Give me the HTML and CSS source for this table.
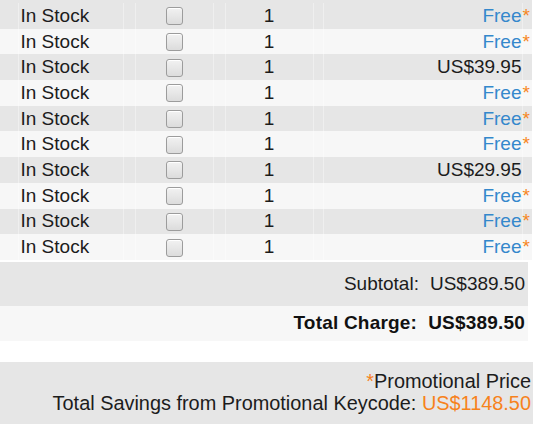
FILE: index.html
```html
<!DOCTYPE html>
<html>
<head>
<meta charset="utf-8">
<link rel="stylesheet" href="styles.css">
</head>
<body>
<div class="page">
  <div class="items-wrap">
  <table class="items">
    <colgroup>
      <col class="c0"><col class="c1"><col class="c2"><col class="c3"><col class="c4"><col class="c5"><col class="c6"><col class="c7"><col class="c8">
    </colgroup>
    <tbody>
      <tr class="odd"><td></td><td class="stock">In Stock</td><td></td><td class="chk"><span class="box"></span></td><td></td><td class="qty">1</td><td></td><td class="price free">Free</td><td class="star">*</td></tr>
      <tr class="even"><td></td><td class="stock">In Stock</td><td></td><td class="chk"><span class="box"></span></td><td></td><td class="qty">1</td><td></td><td class="price free">Free</td><td class="star">*</td></tr>
      <tr class="odd"><td></td><td class="stock">In Stock</td><td></td><td class="chk"><span class="box"></span></td><td></td><td class="qty">1</td><td></td><td class="price">US$39.95</td><td class="star"></td></tr>
      <tr class="even"><td></td><td class="stock">In Stock</td><td></td><td class="chk"><span class="box"></span></td><td></td><td class="qty">1</td><td></td><td class="price free">Free</td><td class="star">*</td></tr>
      <tr class="odd"><td></td><td class="stock">In Stock</td><td></td><td class="chk"><span class="box"></span></td><td></td><td class="qty">1</td><td></td><td class="price free">Free</td><td class="star">*</td></tr>
      <tr class="even"><td></td><td class="stock">In Stock</td><td></td><td class="chk"><span class="box"></span></td><td></td><td class="qty">1</td><td></td><td class="price free">Free</td><td class="star">*</td></tr>
      <tr class="odd"><td></td><td class="stock">In Stock</td><td></td><td class="chk"><span class="box"></span></td><td></td><td class="qty">1</td><td></td><td class="price">US$29.95</td><td class="star"></td></tr>
      <tr class="even"><td></td><td class="stock">In Stock</td><td></td><td class="chk"><span class="box"></span></td><td></td><td class="qty">1</td><td></td><td class="price free">Free</td><td class="star">*</td></tr>
      <tr class="odd"><td></td><td class="stock">In Stock</td><td></td><td class="chk"><span class="box"></span></td><td></td><td class="qty">1</td><td></td><td class="price free">Free</td><td class="star">*</td></tr>
      <tr class="even"><td></td><td class="stock">In Stock</td><td></td><td class="chk"><span class="box"></span></td><td></td><td class="qty">1</td><td></td><td class="price free">Free</td><td class="star">*</td></tr>
    </tbody>
  </table>
  </div>

  <div class="summary">
    <div class="sum-row subtotal">
      <span class="label">Subtotal:</span><span class="value">US$389.50</span>
    </div>
    <div class="sum-row total">
      <span class="label">Total Charge:</span><span class="value">US$389.50</span>
    </div>
  </div>

  <div class="promo">
    <div class="promo-line"><span class="orange">*</span>Promotional Price</div>
    <div class="promo-line">Total Savings from Promotional Keycode: <span class="orange">US$1148.50</span></div>
  </div>
</div>
</body>
</html>
```

FILE: styles.css
```css
html, body {
  margin: 0;
  padding: 0;
  background: #ffffff;
}

body {
  font-family: "Liberation Sans", Arial, sans-serif;
  font-size: 19px;
  color: #1c1c1c;
}

.page {
  width: 545px;
}

.items-wrap {
  width: 532px;
  padding-top: 3px;
  background: #e6e6e6;
}

.items {
  border-collapse: collapse;
  table-layout: fixed;
  width: 532px;
}

.c0 { width: 18px; }
.c1 { width: 105px; }
.c2 { width: 12px; }
.c3 { width: 78px; }
.c4 { width: 12px; }
.c5 { width: 88px; }
.c6 { width: 10px; }
.c7 { width: 199px; }
.c8 { width: 10px; }

.items td {
  height: 25.7px;
  padding: 0;
  line-height: 22px;
  vertical-align: middle;
  border-left: 1px solid rgba(255, 255, 255, 0.35);
  white-space: nowrap;
}

.items td:first-child {
  border-left: none;
}

.items tr.odd td {
  background: #e6e6e6;
}

.items tr.even td {
  background: #f7f7f7;
}

.stock {
  padding-left: 2px !important;
}

.chk {
  text-align: center;
}

.box {
  display: inline-block;
  width: 15px;
  height: 16px;
  border: 1px solid #9c9c9c;
  border-radius: 3px;
  background: linear-gradient(#f2f2f2, #dcdcdc);
  box-shadow: inset 0 1px 0 #ffffff;
  vertical-align: middle;
  margin-top: -1px;
}

.qty {
  text-align: center;
}

.price {
  text-align: right;
}

.free {
  color: #3488cc;
}

.star {
  color: #f7861e;
  text-align: left;
  overflow: visible;
}

.summary {
  margin-top: 2px;
  width: 528px;
}

.sum-row {
  display: flex;
  justify-content: flex-end;
  gap: 11px;
  padding-right: 3px;
}

.subtotal {
  height: 44px;
  align-items: center;
  background: #e6e6e6;
}

.total {
  height: 35px;
  align-items: center;
  background: #f7f7f7;
  font-weight: bold;
  color: #111111;
  letter-spacing: 0.2px;
}

.promo {
  margin-top: 21px;
  width: 533px;
  height: 62px;
  box-sizing: border-box;
  background: #e6e6e6;
  text-align: right;
  padding-top: 8px;
  padding-right: 2px;
  font-size: 19.9px;
}

.promo-line {
  line-height: 22px;
}

.orange {
  color: #f7821c;
}
```
